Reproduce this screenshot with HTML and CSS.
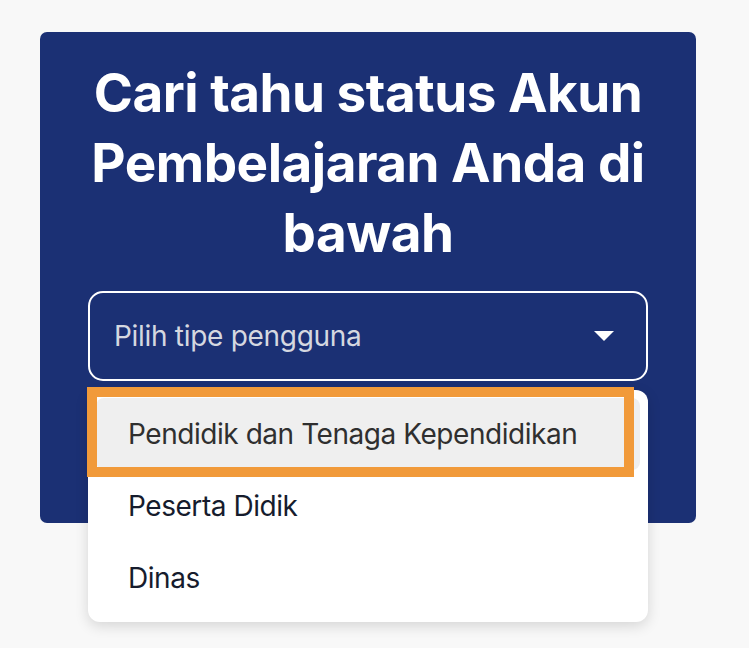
FILE: index.html
```html
<!DOCTYPE html>
<html lang="id">
<head>
  <meta charset="UTF-8">
  <meta name="viewport" content="width=device-width, initial-scale=1.0">
  <title>Status Akun Pembelajaran</title>
  <link rel="stylesheet" href="styles.css">
</head>
<body>
  <div class="page">
    <div class="panel">
      <h1 class="title">Cari tahu status Akun Pembelajaran Anda di bawah</h1>
      <div class="select-wrap">
        <div class="select">
          <span class="placeholder">Pilih tipe pengguna</span>
          <span class="caret"></span>
        </div>
        <ul class="menu">
          <li class="menu-item active">Pendidik dan Tenaga Kependidikan</li>
          <li class="menu-item">Peserta Didik</li>
          <li class="menu-item">Dinas</li>
        </ul>
      </div>
    </div>
    <div class="highlight"></div>
  </div>
</body>
</html>
```

FILE: styles.css
```css
body{
  margin: 0;
  background-color: #f8f8f8;
  font-family: Inter, "Noto Sans", sans-serif;
}
.page{
  position: relative;
  min-height: 648px;
  padding: 32px 0 0 40px;
  box-sizing: border-box;
}
.panel{
  width: 656px;
  padding: 26px 48px 142px;
  box-sizing: border-box;
  background-color: #1b3074;
  border-radius: 7px;
}
.title{
  margin: 0 0 23px;
  color: #fff;
  font-size: 53px;
  font-weight: 700;
  line-height: 70px;
  text-align: center;
  letter-spacing: -0.5px;
}
.select-wrap{
  position: relative;
}
.select{
  height: 90px;
  display: flex;
  align-items: center;
  justify-content: space-between;
  padding: 0 32px 0 24px;
  border: 2px solid #fff;
  border-radius: 15px;
  box-sizing: border-box;
}
.placeholder{
  color: #d5d8e0;
  font-size: 28px;
  letter-spacing: -0.3px;
}
.caret{
  width: 0;
  height: 0;
  border-left: 10px solid transparent;
  border-right: 10px solid transparent;
  border-top: 10px solid #fff;
}
.menu{
  position: absolute;
  top: 99px;
  left: 0;
  right: 0;
  z-index: 1;
  margin: 0;
  padding: 8px;
  list-style: none;
  background-color: #fff;
  border-radius: 12px;
  box-shadow: 0 4px 14px rgba(0, 0, 0, 0.14);
}
.menu-item{
  height: 72px;
  display: flex;
  align-items: center;
  padding: 0 32px;
  border-radius: 8px;
  color: #161c2d;
  font-size: 28px;
  letter-spacing: -0.45px;
}
.menu-item.active{
  background-color: #efefef;
  color: #2f2f2f;
}
.highlight{
  position: absolute;
  left: 87px;
  top: 387px;
  z-index: 2;
  width: 547px;
  height: 90px;
  box-sizing: border-box;
  border: 10px solid #f19a3a;
}
```
